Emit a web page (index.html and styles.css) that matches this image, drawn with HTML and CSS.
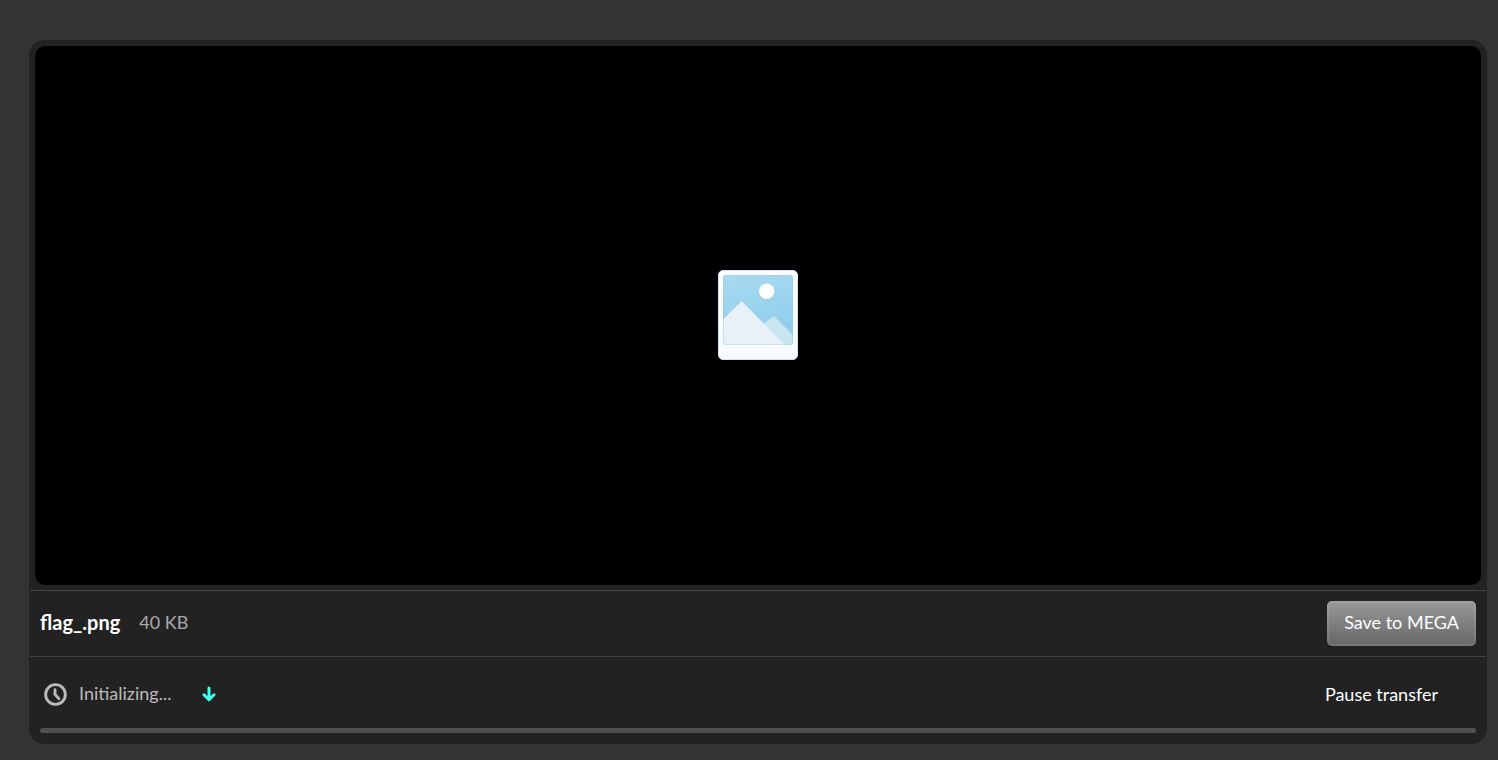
FILE: index.html
```
<!DOCTYPE html>
<html lang="en">
<head>
    <meta charset="UTF-8">
    <meta name="viewport" content="width=device-width, initial-scale=1.0">
    <title>flag_.png</title>
    <link rel="stylesheet" href="styles.css">
</head>
<body>
    <main class="download-page">
        <section class="download-card">
            <div class="viewer">
                <svg class="file-icon" viewBox="0 0 80 90" role="img" aria-label="Image file">
                    <defs>
                        <linearGradient id="paper" x1="0" y1="0" x2="0" y2="1">
                            <stop offset="0" stop-color="#ffffff"/>
                            <stop offset="1" stop-color="#f7fbfe"/>
                        </linearGradient>
                        <linearGradient id="sky" x1="0" y1="0" x2="0.2" y2="1">
                            <stop offset="0" stop-color="#a9daf0"/>
                            <stop offset="1" stop-color="#8ccdec"/>
                        </linearGradient>
                        <clipPath id="photo">
                            <rect x="5" y="5" width="70" height="70" rx="3"/>
                        </clipPath>
                    </defs>
                    <rect x="0.5" y="0.5" width="79" height="89" rx="4.5" fill="url(#paper)" stroke="#cde6f4"/>
                    <g clip-path="url(#photo)">
                        <rect x="5" y="5" width="70" height="70" fill="url(#sky)"/>
                        <path d="M38 60 46 53.500 56 46 75 65V75H38z" fill="#c9e5f1"/>
                        <path d="M5 49.500 23.700 31 67 75H5z" fill="#e8f1f8"/>
                    </g>
                    <rect x="5.500" y="5.500" width="69" height="69" rx="2.500" fill="none" stroke="#8fc8e4" stroke-opacity="0.4"/>
                    <circle cx="48.700" cy="21.300" r="7.700" fill="#fff"/>
                </svg>
            </div>

            <div class="file-row">
                <h1 class="file-name">flag_.png</h1>
                <span class="file-size">40 KB</span>
                <button type="button" class="save-btn">Save to MEGA</button>
            </div>

            <div class="transfer">
                <div class="transfer-row">
                    <svg class="clock-icon" viewBox="0 0 24 24" aria-hidden="true">
                        <circle cx="12" cy="12" r="10.300"/>
                        <path d="M11.500 7v5l4 4.300"/>
                    </svg>
                    <span class="status">Initializing...</span>
                    <svg class="arrow-icon" viewBox="0 0 14 16" aria-hidden="true">
                        <path d="M7 2v11M2 8.800l5 5 5-5"/>
                    </svg>
                    <button type="button" class="pause-btn">Pause transfer</button>
                </div>
                <progress class="progress" value="0" max="100" aria-label="Download progress"></progress>
            </div>
        </section>
    </main>
</body>
</html>
```
FILE: styles.css
```
* {
    box-sizing: border-box;
}

body {
    margin: 0;
    background: #333;
    color: #fff;
    font-family: Lato, "Open Sans", sans-serif;
    font-size: 18px;
    line-height: 24px;
}

button {
    font: inherit;
    color: inherit;
    cursor: pointer;
}

.download-page {
    display: flex;
    min-height: 100vh;
    padding: 40px 11px 16px 29px;
}

.download-card {
    display: flex;
    flex: 1;
    flex-direction: column;
    border: 1px solid #222;
    border-radius: 15px;
    background: #222;
}

.viewer {
    display: flex;
    flex: 1;
    align-items: center;
    justify-content: center;
    margin: 5px;
    padding-bottom: 2px;
    border-radius: 10px;
    background: #000;
}

.file-icon {
    width: 80px;
    height: 90px;
}

/* File name and save button */
.file-row {
    display: flex;
    align-items: center;
    gap: 19px;
    padding: 10px;
    border-top: 1px solid #444;
}

.file-name,
.file-size {
    margin: 0;
    padding-bottom: 4px;
}

.file-name {
    font-size: 20px;
    font-weight: bold;
}

.file-size {
    color: #aaa;
}

.save-btn {
    height: 45px;
    margin-left: auto;
    padding: 0 15px 4px;
    border: 2px solid rgba(255, 255, 255, 0.1);
    border-radius: 5px;
    background: linear-gradient(#999, #666) border-box;
}

/* Transfer status */
.transfer {
    padding: 22px 10px 10px;
    border-top: 1px solid #444;
}

.transfer-row {
    display: flex;
    align-items: center;
    height: 30px;
    margin-bottom: 19px;
    padding: 0 38px 0 4px;
}

.clock-icon {
    width: 23px;
    height: 23px;
    margin-right: 12px;
    fill: none;
    stroke: #bbb;
    stroke-width: 3;
    stroke-linecap: round;
}

.status {
    padding-bottom: 2px;
    color: #bbb;
}

.arrow-icon {
    width: 14px;
    height: 16px;
    margin-left: 31px;
    fill: none;
    stroke: #4fe;
    stroke-width: 3;
    stroke-linecap: round;
    stroke-linejoin: round;
}

.pause-btn {
    margin-left: auto;
    padding: 0;
    border: 0;
    background: none;
}

.progress {
    display: block;
    width: 100%;
    height: 5px;
    border: 0;
    border-radius: 3px;
    overflow: hidden;
    background: #505050;
    appearance: none;
}

.progress::-webkit-progress-bar {
    background: #505050;
}

.progress::-webkit-progress-value {
    background: #4fe;
}
```
